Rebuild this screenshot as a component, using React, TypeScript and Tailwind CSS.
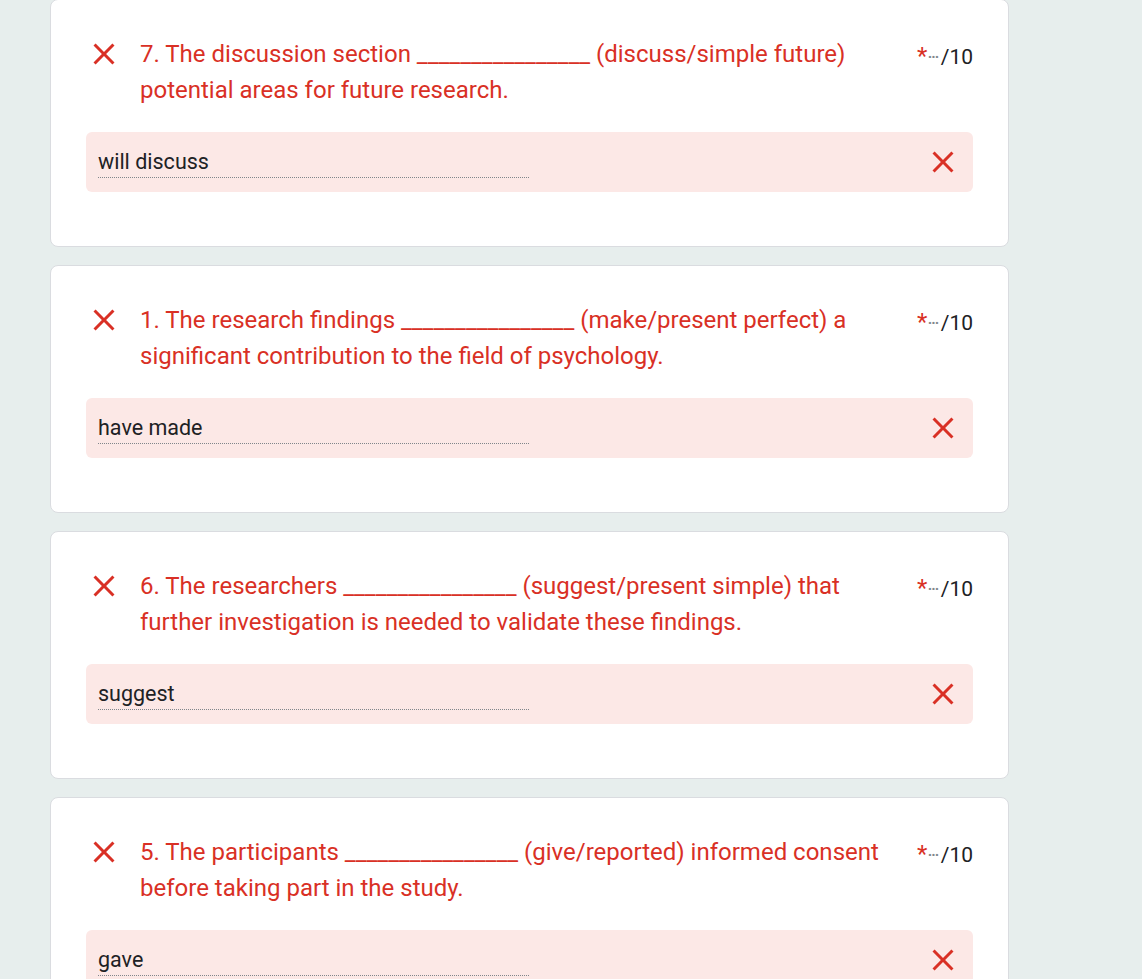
const blank = '________________';

const questions = [
  {
    title: `7. The discussion section ${blank} (discuss/simple future) potential areas for future research.`,
    answer: 'will discuss',
  },
  {
    title: `1. The research findings ${blank} (make/present perfect) a significant contribution to the field of psychology.`,
    answer: 'have made',
  },
  {
    title: `6. The researchers ${blank} (suggest/present simple) that further investigation is needed to validate these findings.`,
    answer: 'suggest',
  },
  {
    title: `5. The participants ${blank} (give/reported) informed consent before taking part in the study.`,
    answer: 'gave',
  },
];

function CloseIcon({ size = 36 }: { size?: number }) {
  return (
    <svg width={size} height={size} viewBox="0 0 24 24" fill="#d93025">
      <path d="M19 6.41L17.59 5 12 10.59 6.41 5 5 6.41 10.59 12 5 17.59 6.41 19 12 13.41 17.59 19 19 17.59 13.41 12z" />
    </svg>
  );
}

function QuestionCard({ title, answer }: { title: string; answer: string }) {
  return (
    <div className="rounded-[8px] border border-[#dadce0] bg-white px-[35px] pt-[36px] pb-[54px]">
      <div className="flex items-start">
        <div className="w-[36px] h-[36px] shrink-0">
          <CloseIcon />
        </div>
        <div className="flex-1 ml-[18px] text-[24px] leading-[36px] text-[#d93025]">{title}</div>
        <div className="shrink-0 ml-[24px] pt-[2px] flex items-baseline leading-[36px] text-[#202124]">
          <span className="text-[24px] text-[#d93025]">*</span>
          <span className="text-[21px] text-[#80868b] tracking-[-2px] mr-[3px]">···</span>
          <span className="text-[21px]">/10</span>
        </div>
      </div>
      <div className="mt-[24px] h-[60px] rounded-[6px] bg-[#fce8e6] flex items-start justify-between pl-[12px] pr-[12px] pt-[18px]">
        <div className="w-[431px] border-b border-dotted border-[#80868b] pb-[3px] text-[21.5px] leading-[24px] text-[#202124]">
          {answer}
        </div>
        <div className="-mt-[6px]">
          <CloseIcon />
        </div>
      </div>
    </div>
  );
}

export default function App() {
  return (
    <div className="min-h-screen bg-[#e7eeed]" style={{ fontFamily: 'Roboto, "Liberation Sans", sans-serif' }}>
      <div className="ml-[50px] w-[959px] -mt-[1px] flex flex-col gap-[18px] pb-[40px]">
        {questions.map((q, i) => (
          <QuestionCard key={i} title={q.title} answer={q.answer} />
        ))}
      </div>
    </div>
  );
}
